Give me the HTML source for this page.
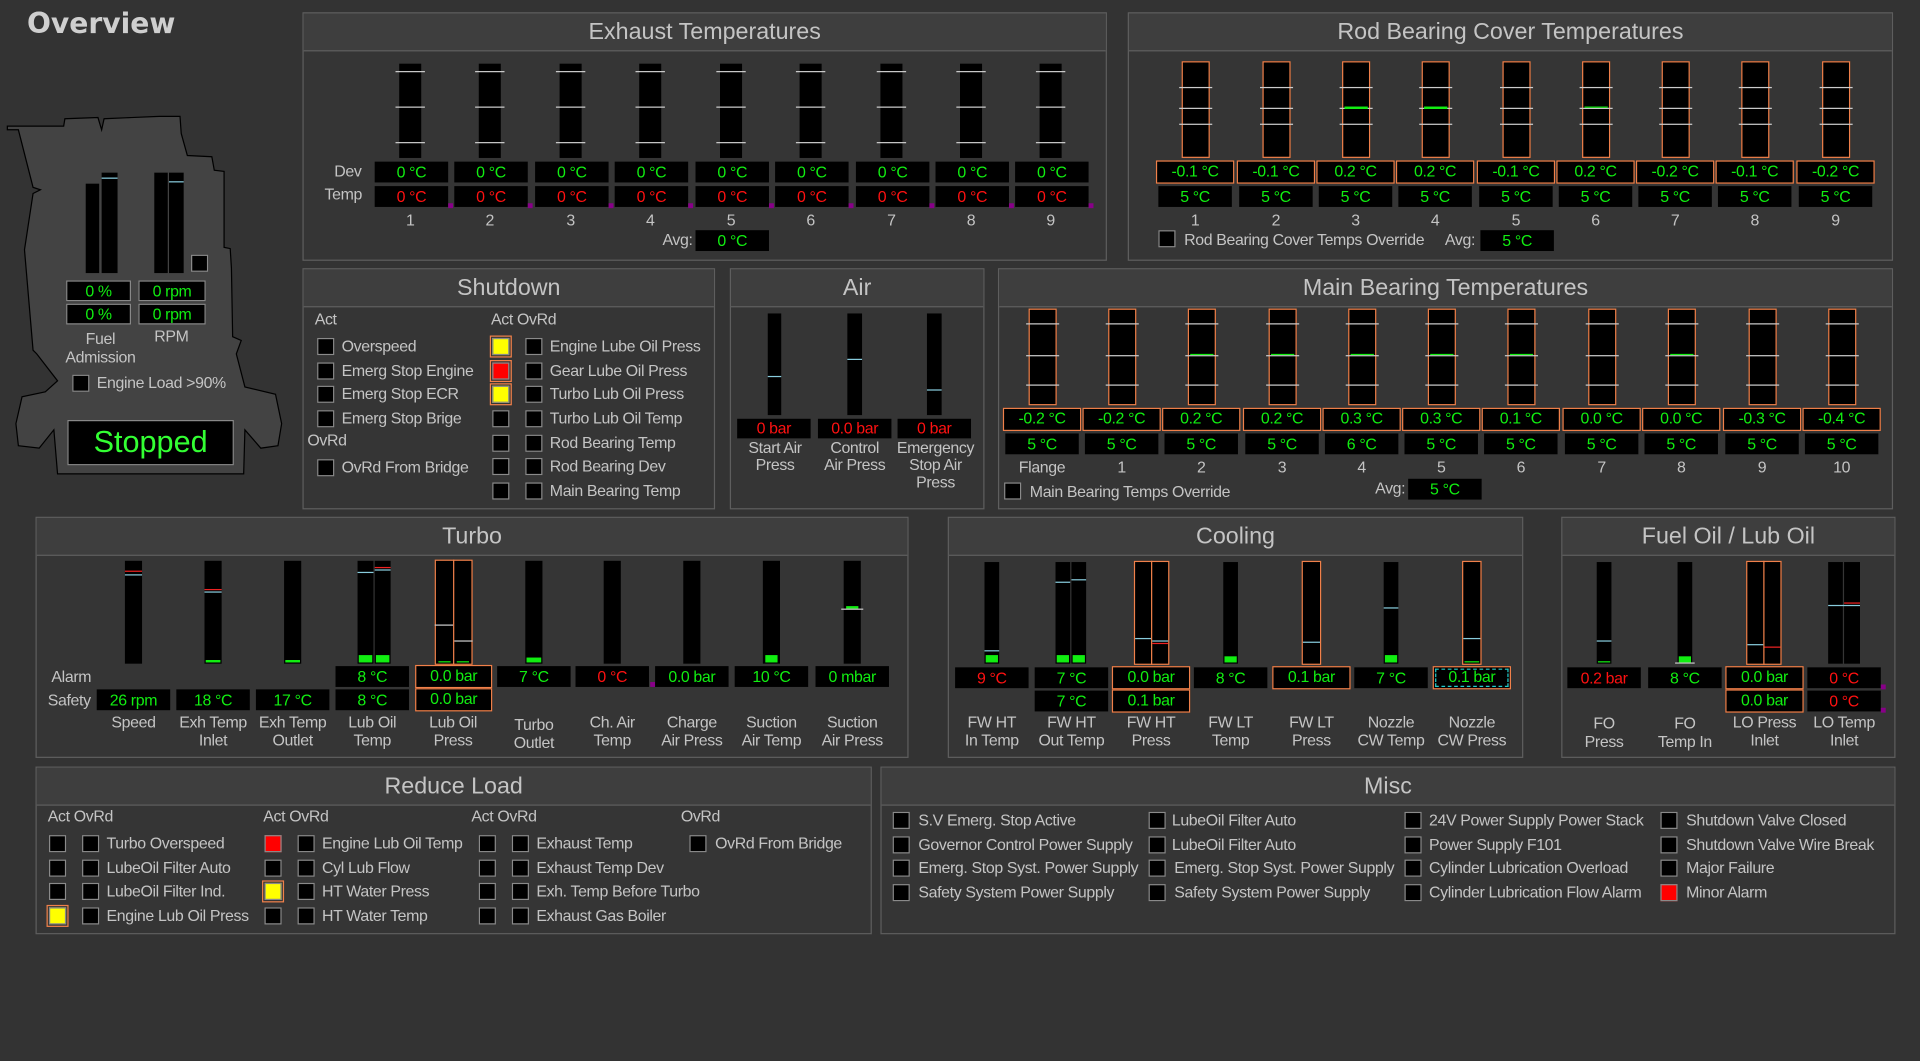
<!DOCTYPE html>
<html><head><meta charset="utf-8"><style>
body{margin:0;background:#333;width:1920px;height:1061px;overflow:hidden}
#s{position:absolute;left:0;top:0;width:1568px;height:866px;transform:scale(1.22449);transform-origin:0 0;font-family:"Liberation Sans",sans-serif;color:#c4c4c4;font-size:13px;letter-spacing:-0.3px}
#s div{position:absolute;box-sizing:border-box}
.p{border:1px solid #5e5e5e;background:#353535}
.h{left:0;right:0;top:0;height:31px;border-bottom:1px solid #5e5e5e;background:#3e3e3e;text-align:center;font-size:19px;line-height:31px;letter-spacing:0}
.b{background:#000}
.v{background:#000;color:#1e1;text-align:center;line-height:17px;height:17px;width:60px;white-space:nowrap}
.r{color:#f11}
.o{border:1px solid #f0804a;line-height:16px}
.c{width:14px;height:14px;background:#000;border:1px solid #8a8a8a}
.t{white-space:nowrap;line-height:16px}
.n{width:90px;text-align:center;line-height:15px;white-space:nowrap}
.k{height:1px;background:#ccc}
.g{background:#1e1}
.cy{height:1px;background:#8cd}
.rd{height:1px;background:#e22}
.pu{width:4px;height:4px;background:#808}
.y{background:#ff0}
.rf{background:#f00}
.of{border:1px solid #f0804a}
</style></head><body><div id="s">
<div class="t" style="left:22px;top:6px;font-family:'DejaVu Sans',sans-serif;font-size:23px;font-weight:bold;line-height:28px;color:#cfcfcf;letter-spacing:0">Overview</div>

<!-- engine -->
<svg style="position:absolute;left:0;top:0" width="240" height="400"><polygon points="6,103 52,103 53,97 80,96 83,106 85,97 107,96 130,95 147,95 148,109 153,127 173,128 175,139 183,140 183,202 188,203 189,219 190,275 197,278 193,289 200,316 225,322 230,346 227,364 213,366 200,351 199,387 47,387 44,351 32,366 15,364 13,346 18,324 37,320 47,311 30,289 27,286 20,204 27,158 33,155 27,153 15,106 6,106" fill="#434343" stroke="#000" stroke-width="1"/></svg>
<div class="b" style="left:70px;top:150px;width:11px;height:73px"></div>
<div class="b" style="left:83px;top:141px;width:13px;height:82px"></div>
<div class="cy" style="left:83px;top:145px;width:13px"></div>
<div class="b" style="left:126px;top:141px;width:11px;height:82px"></div>
<div class="b" style="left:138px;top:141px;width:12px;height:82px"></div>
<div class="cy" style="left:138px;top:148px;width:12px"></div>
<div class="c" style="left:156px;top:208px"></div>
<div class="v" style="left:54px;top:229px;width:53px;border:1px solid #888;line-height:15px">0 %</div>
<div class="v" style="left:113px;top:229px;width:55px;border:1px solid #888;line-height:15px">0 rpm</div>
<div class="v" style="left:54px;top:248px;width:53px;border:1px solid #888;line-height:15px">0 %</div>
<div class="v" style="left:113px;top:248px;width:55px;border:1px solid #888;line-height:15px">0 rpm</div>
<div class="n" style="left:37px;top:269px">Fuel<br>Admission</div>
<div class="n" style="left:95px;top:267px">RPM</div>
<div class="c" style="left:59px;top:306px"></div>
<div class="t" style="left:79px;top:305px">Engine Load &gt;90%</div>
<div class="b" style="left:55px;top:343px;width:136px;height:37px;border:1px solid #888;color:#3f3;font-size:25px;text-align:center;line-height:35px;letter-spacing:0">Stopped</div>

<!-- Exhaust -->
<div class="p" style="left:247px;top:10px;width:657px;height:203px"><div class="h">Exhaust Temperatures</div></div>
<div class="t" style="left:273px;top:132px">Dev</div><div class="t" style="left:265px;top:151px">Temp</div>
<div class="b" style="left:326px;top:52px;width:18px;height:77px"></div><div class="k" style="left:323px;top:58px;width:24px"></div><div class="k" style="left:323px;top:87px;width:24px"></div><div class="k" style="left:323px;top:116px;width:24px"></div>
<div class="b" style="left:391px;top:52px;width:18px;height:77px"></div><div class="k" style="left:388px;top:58px;width:24px"></div><div class="k" style="left:388px;top:87px;width:24px"></div><div class="k" style="left:388px;top:116px;width:24px"></div>
<div class="b" style="left:457px;top:52px;width:18px;height:77px"></div><div class="k" style="left:454px;top:58px;width:24px"></div><div class="k" style="left:454px;top:87px;width:24px"></div><div class="k" style="left:454px;top:116px;width:24px"></div>
<div class="b" style="left:522px;top:52px;width:18px;height:77px"></div><div class="k" style="left:519px;top:58px;width:24px"></div><div class="k" style="left:519px;top:87px;width:24px"></div><div class="k" style="left:519px;top:116px;width:24px"></div>
<div class="b" style="left:588px;top:52px;width:18px;height:77px"></div><div class="k" style="left:585px;top:58px;width:24px"></div><div class="k" style="left:585px;top:87px;width:24px"></div><div class="k" style="left:585px;top:116px;width:24px"></div>
<div class="b" style="left:653px;top:52px;width:18px;height:77px"></div><div class="k" style="left:650px;top:58px;width:24px"></div><div class="k" style="left:650px;top:87px;width:24px"></div><div class="k" style="left:650px;top:116px;width:24px"></div>
<div class="b" style="left:719px;top:52px;width:18px;height:77px"></div><div class="k" style="left:716px;top:58px;width:24px"></div><div class="k" style="left:716px;top:87px;width:24px"></div><div class="k" style="left:716px;top:116px;width:24px"></div>
<div class="b" style="left:784px;top:52px;width:18px;height:77px"></div><div class="k" style="left:781px;top:58px;width:24px"></div><div class="k" style="left:781px;top:87px;width:24px"></div><div class="k" style="left:781px;top:116px;width:24px"></div>
<div class="b" style="left:849px;top:52px;width:18px;height:77px"></div><div class="k" style="left:846px;top:58px;width:24px"></div><div class="k" style="left:846px;top:87px;width:24px"></div><div class="k" style="left:846px;top:116px;width:24px"></div>
<div class="v" style="left:306px;top:132px">0 °C</div><div class="v r" style="left:306px;top:152px">0 °C</div><div class="pu" style="left:366px;top:166px"></div><div class="n" style="left:290px;top:172px">1</div>
<div class="v" style="left:371px;top:132px">0 °C</div><div class="v r" style="left:371px;top:152px">0 °C</div><div class="pu" style="left:431px;top:166px"></div><div class="n" style="left:355px;top:172px">2</div>
<div class="v" style="left:437px;top:132px">0 °C</div><div class="v r" style="left:437px;top:152px">0 °C</div><div class="pu" style="left:497px;top:166px"></div><div class="n" style="left:421px;top:172px">3</div>
<div class="v" style="left:502px;top:132px">0 °C</div><div class="v r" style="left:502px;top:152px">0 °C</div><div class="pu" style="left:562px;top:166px"></div><div class="n" style="left:486px;top:172px">4</div>
<div class="v" style="left:568px;top:132px">0 °C</div><div class="v r" style="left:568px;top:152px">0 °C</div><div class="pu" style="left:628px;top:166px"></div><div class="n" style="left:552px;top:172px">5</div>
<div class="v" style="left:633px;top:132px">0 °C</div><div class="v r" style="left:633px;top:152px">0 °C</div><div class="pu" style="left:693px;top:166px"></div><div class="n" style="left:617px;top:172px">6</div>
<div class="v" style="left:699px;top:132px">0 °C</div><div class="v r" style="left:699px;top:152px">0 °C</div><div class="pu" style="left:759px;top:166px"></div><div class="n" style="left:683px;top:172px">7</div>
<div class="v" style="left:764px;top:132px">0 °C</div><div class="v r" style="left:764px;top:152px">0 °C</div><div class="pu" style="left:824px;top:166px"></div><div class="n" style="left:748px;top:172px">8</div>
<div class="v" style="left:829px;top:132px">0 °C</div><div class="v r" style="left:829px;top:152px">0 °C</div><div class="pu" style="left:889px;top:166px"></div><div class="n" style="left:813px;top:172px">9</div>
<div class="t" style="left:541px;top:188px">Avg:</div><div class="v" style="left:568px;top:188px">0 °C</div>

<!-- Rod bearing -->
<div class="p" style="left:921px;top:10px;width:625px;height:203px"><div class="h">Rod Bearing Cover Temperatures</div></div>
<div class="b of" style="left:965px;top:50px;width:23px;height:79px"></div><div class="k" style="left:963px;top:71px;width:27px"></div><div class="k" style="left:963px;top:88px;width:27px"></div><div class="k" style="left:963px;top:101px;width:27px"></div>
<div class="b of" style="left:1031px;top:50px;width:23px;height:79px"></div><div class="k" style="left:1029px;top:71px;width:27px"></div><div class="k" style="left:1029px;top:88px;width:27px"></div><div class="k" style="left:1029px;top:101px;width:27px"></div>
<div class="b of" style="left:1096px;top:50px;width:23px;height:79px"></div><div class="k" style="left:1094px;top:71px;width:27px"></div><div class="k" style="left:1094px;top:88px;width:27px"></div><div class="k" style="left:1094px;top:101px;width:27px"></div><div class="g" style="left:1098px;top:87px;width:19px;height:2px"></div>
<div class="b of" style="left:1161px;top:50px;width:23px;height:79px"></div><div class="k" style="left:1159px;top:71px;width:27px"></div><div class="k" style="left:1159px;top:88px;width:27px"></div><div class="k" style="left:1159px;top:101px;width:27px"></div><div class="g" style="left:1163px;top:87px;width:19px;height:2px"></div>
<div class="b of" style="left:1227px;top:50px;width:23px;height:79px"></div><div class="k" style="left:1225px;top:71px;width:27px"></div><div class="k" style="left:1225px;top:88px;width:27px"></div><div class="k" style="left:1225px;top:101px;width:27px"></div>
<div class="b of" style="left:1292px;top:50px;width:23px;height:79px"></div><div class="k" style="left:1290px;top:71px;width:27px"></div><div class="k" style="left:1290px;top:88px;width:27px"></div><div class="k" style="left:1290px;top:101px;width:27px"></div><div class="g" style="left:1294px;top:87px;width:19px;height:1px"></div>
<div class="b of" style="left:1357px;top:50px;width:23px;height:79px"></div><div class="k" style="left:1355px;top:71px;width:27px"></div><div class="k" style="left:1355px;top:88px;width:27px"></div><div class="k" style="left:1355px;top:101px;width:27px"></div>
<div class="b of" style="left:1422px;top:50px;width:23px;height:79px"></div><div class="k" style="left:1420px;top:71px;width:27px"></div><div class="k" style="left:1420px;top:88px;width:27px"></div><div class="k" style="left:1420px;top:101px;width:27px"></div>
<div class="b of" style="left:1488px;top:50px;width:23px;height:79px"></div><div class="k" style="left:1486px;top:71px;width:27px"></div><div class="k" style="left:1486px;top:88px;width:27px"></div><div class="k" style="left:1486px;top:101px;width:27px"></div>
<div class="v o" style="left:944px;top:131px;width:64px;height:19px">-0.1 °C</div><div class="v" style="left:946px;top:152px">5 °C</div><div class="n" style="left:931px;top:172px">1</div>
<div class="v o" style="left:1010px;top:131px;width:64px;height:19px">-0.1 °C</div><div class="v" style="left:1012px;top:152px">5 °C</div><div class="n" style="left:997px;top:172px">2</div>
<div class="v o" style="left:1075px;top:131px;width:64px;height:19px">0.2 °C</div><div class="v" style="left:1077px;top:152px">5 °C</div><div class="n" style="left:1062px;top:172px">3</div>
<div class="v o" style="left:1140px;top:131px;width:64px;height:19px">0.2 °C</div><div class="v" style="left:1142px;top:152px">5 °C</div><div class="n" style="left:1127px;top:172px">4</div>
<div class="v o" style="left:1206px;top:131px;width:64px;height:19px">-0.1 °C</div><div class="v" style="left:1208px;top:152px">5 °C</div><div class="n" style="left:1193px;top:172px">5</div>
<div class="v o" style="left:1271px;top:131px;width:64px;height:19px">0.2 °C</div><div class="v" style="left:1273px;top:152px">5 °C</div><div class="n" style="left:1258px;top:172px">6</div>
<div class="v o" style="left:1336px;top:131px;width:64px;height:19px">-0.2 °C</div><div class="v" style="left:1338px;top:152px">5 °C</div><div class="n" style="left:1323px;top:172px">7</div>
<div class="v o" style="left:1401px;top:131px;width:64px;height:19px">-0.1 °C</div><div class="v" style="left:1403px;top:152px">5 °C</div><div class="n" style="left:1388px;top:172px">8</div>
<div class="v o" style="left:1467px;top:131px;width:64px;height:19px">-0.2 °C</div><div class="v" style="left:1469px;top:152px">5 °C</div><div class="n" style="left:1454px;top:172px">9</div>
<div class="c" style="left:946px;top:188px"></div><div class="t" style="left:967px;top:188px">Rod Bearing Cover Temps Override</div>
<div class="t" style="left:1180px;top:188px">Avg:</div><div class="v" style="left:1209px;top:188px">5 °C</div>

<!-- Shutdown -->
<div class="p" style="left:247px;top:219px;width:337px;height:197px"><div class="h">Shutdown</div></div>
<div class="t" style="left:257px;top:253px">Act</div><div class="t" style="left:401px;top:253px">Act OvRd</div>
<div class="c" style="left:259px;top:276px"></div><div class="t" style="left:279px;top:275px">Overspeed</div>
<div class="c" style="left:259px;top:296px"></div><div class="t" style="left:279px;top:295px">Emerg Stop Engine</div>
<div class="c" style="left:259px;top:315px"></div><div class="t" style="left:279px;top:314px">Emerg Stop ECR</div>
<div class="c" style="left:259px;top:335px"></div><div class="t" style="left:279px;top:334px">Emerg Stop Brige</div>
<div class="t" style="left:251px;top:352px">OvRd</div>
<div class="c" style="left:259px;top:375px"></div><div class="t" style="left:279px;top:374px">OvRd From Bridge</div>
<div class="c y" style="left:402px;top:276px;outline:1px solid #f0804a;outline-offset:1px"></div>
<div class="c rf" style="left:402px;top:296px;outline:1px solid #f0804a;outline-offset:1px"></div>
<div class="c y" style="left:402px;top:315px;outline:1px solid #f0804a;outline-offset:1px"></div>
<div class="c" style="left:402px;top:335px"></div><div class="c" style="left:402px;top:355px"></div><div class="c" style="left:402px;top:374px"></div><div class="c" style="left:402px;top:394px"></div>
<div class="c" style="left:429px;top:276px"></div><div class="t" style="left:449px;top:275px">Engine Lube Oil Press</div>
<div class="c" style="left:429px;top:296px"></div><div class="t" style="left:449px;top:295px">Gear Lube Oil Press</div>
<div class="c" style="left:429px;top:315px"></div><div class="t" style="left:449px;top:314px">Turbo Lub Oil Press</div>
<div class="c" style="left:429px;top:335px"></div><div class="t" style="left:449px;top:334px">Turbo Lub Oil Temp</div>
<div class="c" style="left:429px;top:355px"></div><div class="t" style="left:449px;top:354px">Rod Bearing Temp</div>
<div class="c" style="left:429px;top:374px"></div><div class="t" style="left:449px;top:373px">Rod Bearing Dev</div>
<div class="c" style="left:429px;top:394px"></div><div class="t" style="left:449px;top:393px">Main Bearing Temp</div>

<!-- Air -->
<div class="p" style="left:596px;top:219px;width:208px;height:197px"><div class="h">Air</div></div>
<div class="b" style="left:627px;top:256px;width:11px;height:83px"></div><div class="cy" style="left:627px;top:307px;width:11px"></div>
<div class="b" style="left:692px;top:256px;width:12px;height:83px"></div><div class="cy" style="left:692px;top:293px;width:12px"></div>
<div class="b" style="left:757px;top:256px;width:12px;height:83px"></div><div class="cy" style="left:757px;top:318px;width:12px"></div>
<div class="v r" style="left:602px;top:342px;width:60px;height:16px;line-height:16px">0 bar</div>
<div class="v r" style="left:668px;top:342px;width:60px;height:16px;line-height:16px">0.0 bar</div>
<div class="v r" style="left:733px;top:342px;width:60px;height:16px;line-height:16px">0 bar</div>
<div class="n" style="left:588px;top:359px;line-height:14px">Start Air<br>Press</div>
<div class="n" style="left:653px;top:359px;line-height:14px">Control<br>Air Press</div>
<div class="n" style="left:719px;top:359px;line-height:14px">Emergency<br>Stop Air<br>Press</div>

<!-- Main bearing -->
<div class="p" style="left:815px;top:219px;width:731px;height:197px"><div class="h">Main Bearing Temperatures</div></div>
<div class="b of" style="left:840px;top:252px;width:23px;height:79px"></div><div class="k" style="left:838px;top:264px;width:27px"></div><div class="k" style="left:838px;top:290px;width:27px"></div><div class="k" style="left:838px;top:314px;width:27px"></div>
<div class="b of" style="left:905px;top:252px;width:23px;height:79px"></div><div class="k" style="left:903px;top:264px;width:27px"></div><div class="k" style="left:903px;top:290px;width:27px"></div><div class="k" style="left:903px;top:314px;width:27px"></div>
<div class="b of" style="left:970px;top:252px;width:23px;height:79px"></div><div class="k" style="left:968px;top:264px;width:27px"></div><div class="k" style="left:968px;top:290px;width:27px"></div><div class="k" style="left:968px;top:314px;width:27px"></div><div class="g" style="left:972px;top:289px;width:19px;height:1px"></div>
<div class="b of" style="left:1036px;top:252px;width:23px;height:79px"></div><div class="k" style="left:1034px;top:264px;width:27px"></div><div class="k" style="left:1034px;top:290px;width:27px"></div><div class="k" style="left:1034px;top:314px;width:27px"></div><div class="g" style="left:1038px;top:289px;width:19px;height:1px"></div>
<div class="b of" style="left:1101px;top:252px;width:23px;height:79px"></div><div class="k" style="left:1099px;top:264px;width:27px"></div><div class="k" style="left:1099px;top:290px;width:27px"></div><div class="k" style="left:1099px;top:314px;width:27px"></div><div class="g" style="left:1103px;top:289px;width:19px;height:1px"></div>
<div class="b of" style="left:1166px;top:252px;width:23px;height:79px"></div><div class="k" style="left:1164px;top:264px;width:27px"></div><div class="k" style="left:1164px;top:290px;width:27px"></div><div class="k" style="left:1164px;top:314px;width:27px"></div><div class="g" style="left:1168px;top:289px;width:19px;height:1px"></div>
<div class="b of" style="left:1231px;top:252px;width:23px;height:79px"></div><div class="k" style="left:1229px;top:264px;width:27px"></div><div class="k" style="left:1229px;top:290px;width:27px"></div><div class="k" style="left:1229px;top:314px;width:27px"></div><div class="g" style="left:1233px;top:289px;width:19px;height:1px"></div>
<div class="b of" style="left:1297px;top:252px;width:23px;height:79px"></div><div class="k" style="left:1295px;top:264px;width:27px"></div><div class="k" style="left:1295px;top:290px;width:27px"></div><div class="k" style="left:1295px;top:314px;width:27px"></div>
<div class="b of" style="left:1362px;top:252px;width:23px;height:79px"></div><div class="k" style="left:1360px;top:264px;width:27px"></div><div class="k" style="left:1360px;top:290px;width:27px"></div><div class="k" style="left:1360px;top:314px;width:27px"></div><div class="g" style="left:1364px;top:289px;width:19px;height:1px"></div>
<div class="b of" style="left:1428px;top:252px;width:23px;height:79px"></div><div class="k" style="left:1426px;top:264px;width:27px"></div><div class="k" style="left:1426px;top:290px;width:27px"></div><div class="k" style="left:1426px;top:314px;width:27px"></div>
<div class="b of" style="left:1493px;top:252px;width:23px;height:79px"></div><div class="k" style="left:1491px;top:264px;width:27px"></div><div class="k" style="left:1491px;top:290px;width:27px"></div><div class="k" style="left:1491px;top:314px;width:27px"></div>
<div class="v o" style="left:819px;top:333px;width:64px;height:19px">-0.2 °C</div><div class="v" style="left:821px;top:354px">5 °C</div><div class="n" style="left:806px;top:374px">Flange</div>
<div class="v o" style="left:884px;top:333px;width:64px;height:19px">-0.2 °C</div><div class="v" style="left:886px;top:354px">5 °C</div><div class="n" style="left:871px;top:374px">1</div>
<div class="v o" style="left:949px;top:333px;width:64px;height:19px">0.2 °C</div><div class="v" style="left:951px;top:354px">5 °C</div><div class="n" style="left:936px;top:374px">2</div>
<div class="v o" style="left:1015px;top:333px;width:64px;height:19px">0.2 °C</div><div class="v" style="left:1017px;top:354px">5 °C</div><div class="n" style="left:1002px;top:374px">3</div>
<div class="v o" style="left:1080px;top:333px;width:64px;height:19px">0.3 °C</div><div class="v" style="left:1082px;top:354px">6 °C</div><div class="n" style="left:1067px;top:374px">4</div>
<div class="v o" style="left:1145px;top:333px;width:64px;height:19px">0.3 °C</div><div class="v" style="left:1147px;top:354px">5 °C</div><div class="n" style="left:1132px;top:374px">5</div>
<div class="v o" style="left:1210px;top:333px;width:64px;height:19px">0.1 °C</div><div class="v" style="left:1212px;top:354px">5 °C</div><div class="n" style="left:1197px;top:374px">6</div>
<div class="v o" style="left:1276px;top:333px;width:64px;height:19px">0.0 °C</div><div class="v" style="left:1278px;top:354px">5 °C</div><div class="n" style="left:1263px;top:374px">7</div>
<div class="v o" style="left:1341px;top:333px;width:64px;height:19px">0.0 °C</div><div class="v" style="left:1343px;top:354px">5 °C</div><div class="n" style="left:1328px;top:374px">8</div>
<div class="v o" style="left:1407px;top:333px;width:64px;height:19px">-0.3 °C</div><div class="v" style="left:1409px;top:354px">5 °C</div><div class="n" style="left:1394px;top:374px">9</div>
<div class="v o" style="left:1472px;top:333px;width:64px;height:19px">-0.4 °C</div><div class="v" style="left:1474px;top:354px">5 °C</div><div class="n" style="left:1459px;top:374px">10</div>
<div class="c" style="left:820px;top:394px"></div><div class="t" style="left:841px;top:394px">Main Bearing Temps Override</div>
<div class="t" style="left:1123px;top:391px">Avg:</div><div class="v" style="left:1150px;top:391px">5 °C</div>

<!-- Turbo -->
<div class="p" style="left:29px;top:422px;width:713px;height:197px"><div class="h">Turbo</div></div>
<div class="b" style="left:102px;top:458px;width:14px;height:84px"></div><div class="rd" style="left:102px;top:466px;width:14px"></div><div class="cy" style="left:102px;top:469px;width:14px"></div>
<div class="b" style="left:167px;top:458px;width:14px;height:84px"></div><div class="rd" style="left:167px;top:481px;width:14px"></div><div class="cy" style="left:167px;top:483px;width:14px"></div><div class="g" style="left:168px;top:539px;width:12px;height:2px"></div>
<div class="b" style="left:232px;top:458px;width:14px;height:84px"></div><div class="g" style="left:233px;top:539px;width:12px;height:2px"></div>
<div class="b" style="left:292px;top:458px;width:13px;height:84px"></div><div class="b" style="left:306px;top:458px;width:13px;height:84px"></div><div class="cy" style="left:292px;top:467px;width:13px"></div><div class="rd" style="left:306px;top:463px;width:13px"></div><div class="cy" style="left:306px;top:465px;width:13px"></div><div class="g" style="left:293px;top:535px;width:11px;height:6px"></div><div class="g" style="left:307px;top:535px;width:11px;height:6px"></div>
<div class="b of" style="left:355px;top:457px;width:31px;height:86px"></div><div style="left:370px;top:457px;width:1px;height:86px;background:#f0804a"></div><div class="k" style="left:355px;top:510px;width:15px"></div><div class="k" style="left:371px;top:523px;width:15px"></div><div class="g" style="left:358px;top:540px;width:10px;height:1px"></div><div class="g" style="left:373px;top:540px;width:10px;height:1px"></div>
<div class="b" style="left:429px;top:458px;width:14px;height:84px"></div><div class="g" style="left:430px;top:537px;width:12px;height:4px"></div>
<div class="b" style="left:493px;top:458px;width:14px;height:84px"></div>
<div class="b" style="left:558px;top:458px;width:14px;height:84px"></div>
<div class="b" style="left:623px;top:458px;width:14px;height:84px"></div><div class="g" style="left:625px;top:535px;width:10px;height:6px"></div>
<div class="b" style="left:689px;top:458px;width:14px;height:84px"></div><div class="g" style="left:691px;top:495px;width:10px;height:2px"></div><div class="k" style="left:687px;top:497px;width:18px"></div>
<div class="t" style="left:42px;top:545px">Alarm</div><div class="t" style="left:39px;top:564px">Safety</div>
<div class="v" style="left:274px;top:544px">8 °C</div>
<div class="v o" style="left:339px;top:543px;width:63px;height:19px">0.0 bar</div>
<div class="v" style="left:406px;top:544px">7 °C</div>
<div class="v r" style="left:470px;top:544px">0 °C</div><div class="pu" style="left:531px;top:557px"></div>
<div class="v" style="left:535px;top:544px">0.0 bar</div>
<div class="v" style="left:600px;top:544px">10 °C</div>
<div class="v" style="left:666px;top:544px">0 mbar</div>
<div class="v" style="left:79px;top:563px">26 rpm</div>
<div class="v" style="left:144px;top:563px">18 °C</div>
<div class="v" style="left:209px;top:563px">17 °C</div>
<div class="v" style="left:274px;top:563px">8 °C</div>
<div class="v o" style="left:339px;top:562px;width:63px;height:19px">0.0 bar</div>
<div class="n" style="left:64px;top:582px">Speed</div>
<div class="n" style="left:129px;top:582px">Exh Temp<br>Inlet</div>
<div class="n" style="left:194px;top:582px">Exh Temp<br>Outlet</div>
<div class="n" style="left:259px;top:582px">Lub Oil<br>Temp</div>
<div class="n" style="left:325px;top:582px">Lub Oil<br>Press</div>
<div class="n" style="left:391px;top:584px">Turbo<br>Outlet</div>
<div class="n" style="left:455px;top:582px">Ch. Air<br>Temp</div>
<div class="n" style="left:520px;top:582px">Charge<br>Air Press</div>
<div class="n" style="left:585px;top:582px">Suction<br>Air Temp</div>
<div class="n" style="left:651px;top:582px">Suction<br>Air Press</div>

<!-- Cooling -->
<div class="p" style="left:774px;top:422px;width:470px;height:197px"><div class="h">Cooling</div></div>
<div class="b" style="left:804px;top:459px;width:12px;height:83px"></div><div class="cy" style="left:804px;top:531px;width:12px"></div><div class="g" style="left:805px;top:535px;width:10px;height:6px"></div>
<div class="b" style="left:862px;top:459px;width:12px;height:83px"></div><div class="b" style="left:875px;top:459px;width:12px;height:83px"></div><div class="cy" style="left:862px;top:475px;width:12px"></div><div class="cy" style="left:875px;top:473px;width:12px"></div><div class="g" style="left:863px;top:535px;width:10px;height:6px"></div><div class="g" style="left:876px;top:535px;width:10px;height:6px"></div>
<div class="b of" style="left:926px;top:458px;width:29px;height:85px"></div><div style="left:940px;top:458px;width:1px;height:85px;background:#f0804a"></div><div class="cy" style="left:927px;top:521px;width:13px"></div><div class="rd" style="left:941px;top:525px;width:13px"></div><div class="cy" style="left:941px;top:523px;width:13px"></div>
<div class="b" style="left:999px;top:459px;width:12px;height:83px"></div><div class="g" style="left:1000px;top:536px;width:10px;height:5px"></div>
<div class="b of" style="left:1063px;top:458px;width:16px;height:85px"></div><div class="cy" style="left:1064px;top:524px;width:14px"></div>
<div class="b" style="left:1130px;top:459px;width:12px;height:83px"></div><div class="cy" style="left:1130px;top:496px;width:12px"></div><div class="g" style="left:1131px;top:535px;width:10px;height:6px"></div>
<div class="b of" style="left:1194px;top:458px;width:16px;height:85px"></div><div class="cy" style="left:1195px;top:521px;width:14px"></div><div class="g" style="left:1196px;top:540px;width:12px;height:1px"></div>
<div class="v r" style="left:780px;top:545px">9 °C</div>
<div class="v" style="left:845px;top:545px">7 °C</div>
<div class="v o" style="left:908px;top:544px;width:64px;height:19px">0.0 bar</div>
<div class="v" style="left:975px;top:545px">8 °C</div>
<div class="v o" style="left:1039px;top:544px;width:64px;height:19px">0.1 bar</div>
<div class="v" style="left:1106px;top:545px">7 °C</div>
<div class="v o" style="left:1170px;top:544px;width:64px;height:19px;outline:1px dashed #2cc;outline-offset:-3px">0.1 bar</div>
<div class="v" style="left:845px;top:564px">7 °C</div>
<div class="v o" style="left:908px;top:563px;width:64px;height:19px">0.1 bar</div>
<div class="n" style="left:765px;top:582px">FW HT<br>In Temp</div>
<div class="n" style="left:830px;top:582px">FW HT<br>Out Temp</div>
<div class="n" style="left:895px;top:582px">FW HT<br>Press</div>
<div class="n" style="left:960px;top:582px">FW LT<br>Temp</div>
<div class="n" style="left:1026px;top:582px">FW LT<br>Press</div>
<div class="n" style="left:1091px;top:582px">Nozzle<br>CW Temp</div>
<div class="n" style="left:1157px;top:582px">Nozzle<br>CW Press</div>

<!-- Fuel oil -->
<div class="p" style="left:1275px;top:422px;width:273px;height:197px"><div class="h">Fuel Oil / Lub Oil</div></div>
<div class="b" style="left:1304px;top:459px;width:12px;height:83px"></div><div class="cy" style="left:1304px;top:523px;width:12px"></div><div class="g" style="left:1305px;top:540px;width:10px;height:1px"></div>
<div class="b" style="left:1370px;top:459px;width:12px;height:83px"></div><div class="g" style="left:1371px;top:536px;width:10px;height:5px"></div><div class="k" style="left:1368px;top:541px;width:16px"></div>
<div class="b of" style="left:1426px;top:458px;width:29px;height:85px"></div><div style="left:1440px;top:458px;width:1px;height:85px;background:#f0804a"></div><div class="cy" style="left:1427px;top:526px;width:13px"></div><div class="rd" style="left:1441px;top:528px;width:13px"></div>
<div class="b" style="left:1493px;top:459px;width:12px;height:83px"></div><div class="b" style="left:1506px;top:459px;width:13px;height:83px"></div><div class="cy" style="left:1493px;top:494px;width:26px"></div><div class="rd" style="left:1506px;top:492px;width:13px"></div>
<div class="v r" style="left:1280px;top:545px">0.2 bar</div>
<div class="v" style="left:1346px;top:545px">8 °C</div>
<div class="v o" style="left:1409px;top:544px;width:64px;height:19px">0.0 bar</div>
<div class="v r" style="left:1476px;top:545px">0 °C</div><div class="pu" style="left:1536px;top:559px"></div>
<div class="v o" style="left:1409px;top:563px;width:64px;height:19px">0.0 bar</div>
<div class="v r" style="left:1476px;top:564px">0 °C</div><div class="pu" style="left:1536px;top:578px"></div>
<div class="n" style="left:1265px;top:583px">FO<br>Press</div>
<div class="n" style="left:1331px;top:583px">FO<br>Temp In</div>
<div class="n" style="left:1396px;top:582px">LO Press<br>Inlet</div>
<div class="n" style="left:1461px;top:582px">LO Temp<br>Inlet</div>

<!-- Reduce Load -->
<div class="p" style="left:29px;top:626px;width:683px;height:137px"><div class="h">Reduce Load</div></div>
<div class="t" style="left:39px;top:659px">Act OvRd</div><div class="t" style="left:215px;top:659px">Act OvRd</div><div class="t" style="left:385px;top:659px">Act OvRd</div><div class="t" style="left:556px;top:659px">OvRd</div>
<div class="c" style="left:40px;top:682px"></div><div class="c" style="left:67px;top:682px"></div><div class="t" style="left:87px;top:681px">Turbo Overspeed</div>
<div class="c" style="left:40px;top:702px"></div><div class="c" style="left:67px;top:702px"></div><div class="t" style="left:87px;top:701px">LubeOil Filter Auto</div>
<div class="c" style="left:40px;top:721px"></div><div class="c" style="left:67px;top:721px"></div><div class="t" style="left:87px;top:720px">LubeOil Filter Ind.</div>
<div class="c y" style="left:40px;top:741px;outline:1px solid #f0804a;outline-offset:1px"></div><div class="c" style="left:67px;top:741px"></div><div class="t" style="left:87px;top:740px">Engine Lub Oil Press</div>
<div class="c rf" style="left:216px;top:682px"></div><div class="c" style="left:243px;top:682px"></div><div class="t" style="left:263px;top:681px">Engine Lub Oil Temp</div>
<div class="c" style="left:216px;top:702px"></div><div class="c" style="left:243px;top:702px"></div><div class="t" style="left:263px;top:701px">Cyl Lub Flow</div>
<div class="c y" style="left:216px;top:721px;outline:1px solid #f0804a;outline-offset:1px"></div><div class="c" style="left:243px;top:721px"></div><div class="t" style="left:263px;top:720px">HT Water Press</div>
<div class="c" style="left:216px;top:741px"></div><div class="c" style="left:243px;top:741px"></div><div class="t" style="left:263px;top:740px">HT Water Temp</div>
<div class="c" style="left:391px;top:682px"></div><div class="c" style="left:418px;top:682px"></div><div class="t" style="left:438px;top:681px">Exhaust Temp</div>
<div class="c" style="left:391px;top:702px"></div><div class="c" style="left:418px;top:702px"></div><div class="t" style="left:438px;top:701px">Exhaust Temp Dev</div>
<div class="c" style="left:391px;top:721px"></div><div class="c" style="left:418px;top:721px"></div><div class="t" style="left:438px;top:720px">Exh. Temp Before Turbo</div>
<div class="c" style="left:391px;top:741px"></div><div class="c" style="left:418px;top:741px"></div><div class="t" style="left:438px;top:740px">Exhaust Gas Boiler</div>
<div class="c" style="left:563px;top:682px"></div><div class="t" style="left:584px;top:681px">OvRd From Bridge</div>

<!-- Misc -->
<div class="p" style="left:719px;top:626px;width:829px;height:137px"><div class="h">Misc</div></div>
<div class="c" style="left:729px;top:663px"></div><div class="t" style="left:750px;top:662px">S.V Emerg. Stop Active</div>
<div class="c" style="left:729px;top:683px"></div><div class="t" style="left:750px;top:682px">Governor Control Power Supply</div>
<div class="c" style="left:729px;top:702px"></div><div class="t" style="left:750px;top:701px">Emerg. Stop Syst. Power Supply</div>
<div class="c" style="left:729px;top:722px"></div><div class="t" style="left:750px;top:721px">Safety System Power Supply</div>
<div class="c" style="left:938px;top:663px"></div><div class="t" style="left:957px;top:662px">LubeOil Filter Auto</div>
<div class="c" style="left:938px;top:683px"></div><div class="t" style="left:957px;top:682px">LubeOil Filter Auto</div>
<div class="c" style="left:938px;top:702px"></div><div class="t" style="left:959px;top:701px">Emerg. Stop Syst. Power Supply</div>
<div class="c" style="left:938px;top:722px"></div><div class="t" style="left:959px;top:721px">Safety System Power Supply</div>
<div class="c" style="left:1147px;top:663px"></div><div class="t" style="left:1167px;top:662px">24V Power Supply Power Stack</div>
<div class="c" style="left:1147px;top:683px"></div><div class="t" style="left:1167px;top:682px">Power Supply F101</div>
<div class="c" style="left:1147px;top:702px"></div><div class="t" style="left:1167px;top:701px">Cylinder Lubrication Overload</div>
<div class="c" style="left:1147px;top:722px"></div><div class="t" style="left:1167px;top:721px">Cylinder Lubrication Flow Alarm</div>
<div class="c" style="left:1356px;top:663px"></div><div class="t" style="left:1377px;top:662px">Shutdown Valve Closed</div>
<div class="c" style="left:1356px;top:683px"></div><div class="t" style="left:1377px;top:682px">Shutdown Valve Wire Break</div>
<div class="c" style="left:1356px;top:702px"></div><div class="t" style="left:1377px;top:701px">Major Failure</div>
<div class="c rf" style="left:1356px;top:722px"></div><div class="t" style="left:1377px;top:721px">Minor Alarm</div>
</div></body></html>
